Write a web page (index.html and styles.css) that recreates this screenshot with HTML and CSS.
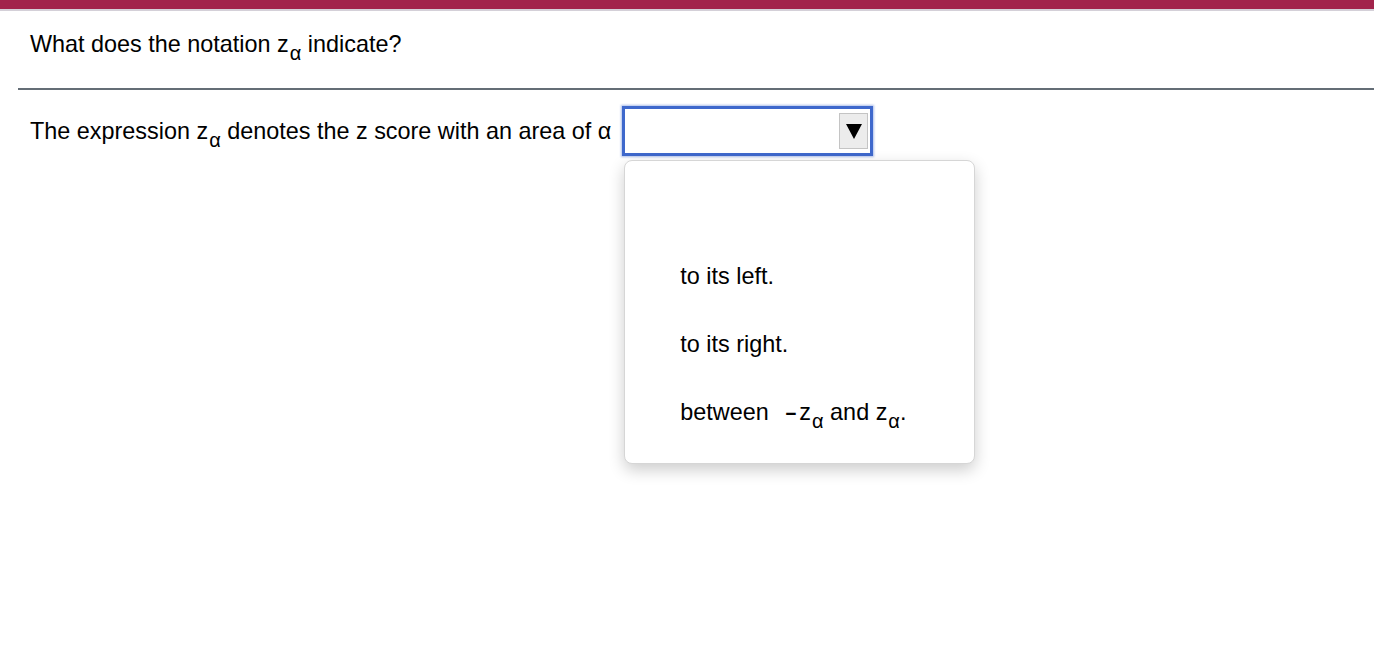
FILE: index.html
```html
<!DOCTYPE html>
<html>
<head>
<meta charset="utf-8">
<link rel="stylesheet" href="styles.css">
</head>
<body>
<div class="page">
<div class="topbar"></div>
<div class="question">What does the notation <span class="var">z<sub>α</sub></span> indicate?</div>
<div class="rule"></div>
<div class="answer">
  <div class="text">The expression <span class="var">z<sub>α</sub></span> denotes the z score with an area of α</div>
  <div class="selwrap">
    <div class="select">
      <div class="btn"><svg width="16" height="16" viewBox="0 0 16 16"><polygon points="0,1 16,1 8,16" fill="#000"/></svg></div>
    </div>
    <div class="menu">
      <div class="item">to its left.</div>
      <div class="item">to its right.</div>
      <div class="item">between <span class="minus">−</span><span class="var">z<sub>α</sub></span> and <span class="var">z<sub>α</sub></span>.</div>
    </div>
  </div>
</div>
</div>
</body>
</html>
```
FILE: styles.css
```css
html, body {
  margin: 0;
  padding: 0;
  background: #fff;
  font-family: "Liberation Sans", Arial, sans-serif;
  font-size: 23.4px;
  color: #000;
}
.page {
  min-height: 666px;
}
.topbar {
  height: 9px;
  background: #a2234b;
  border-bottom: 2px solid #d4d0d8;
}
.question {
  box-sizing: border-box;
  height: 77px;
  padding: 20px 0 0 30px;
  line-height: 27px;
}
.var sub {
  font-size: 20px;
  vertical-align: -8px;
  line-height: 0;
  margin-left: 1px;
}
.rule {
  margin-left: 18px;
  height: 2px;
  background: #646d76;
}
.answer {
  display: flex;
  align-items: center;
  padding: 16px 0 0 30px;
  line-height: 27px;
}
.selwrap {
  position: relative;
  margin-left: 11px;
}
.select {
  display: flex;
  justify-content: flex-end;
  align-items: center;
  box-sizing: border-box;
  width: 251px;
  height: 50px;
  border: 3px solid #3e68cc;
  box-shadow: 0 0 2px 1px rgba(70, 110, 210, 0.45);
  padding-right: 2px;
  background: #fff;
}
.btn {
  display: flex;
  align-items: center;
  justify-content: center;
  box-sizing: border-box;
  width: 29px;
  height: 36px;
  background: #ececec;
  border: 1px solid #c4c4c4;
}
.menu {
  position: absolute;
  left: 2px;
  top: 54px;
  box-sizing: border-box;
  width: 351px;
  height: 304px;
  background: #fff;
  border: 1px solid #d6d6d6;
  border-radius: 8px;
  box-shadow: 0 6px 16px rgba(0, 0, 0, 0.2);
  padding: 102px 0 0 55px;
}
.item {
  height: 68px;
}
.minus {
  font-size: 19px;
  font-weight: bold;
  margin: 0 3px 0 10px;
}
```
